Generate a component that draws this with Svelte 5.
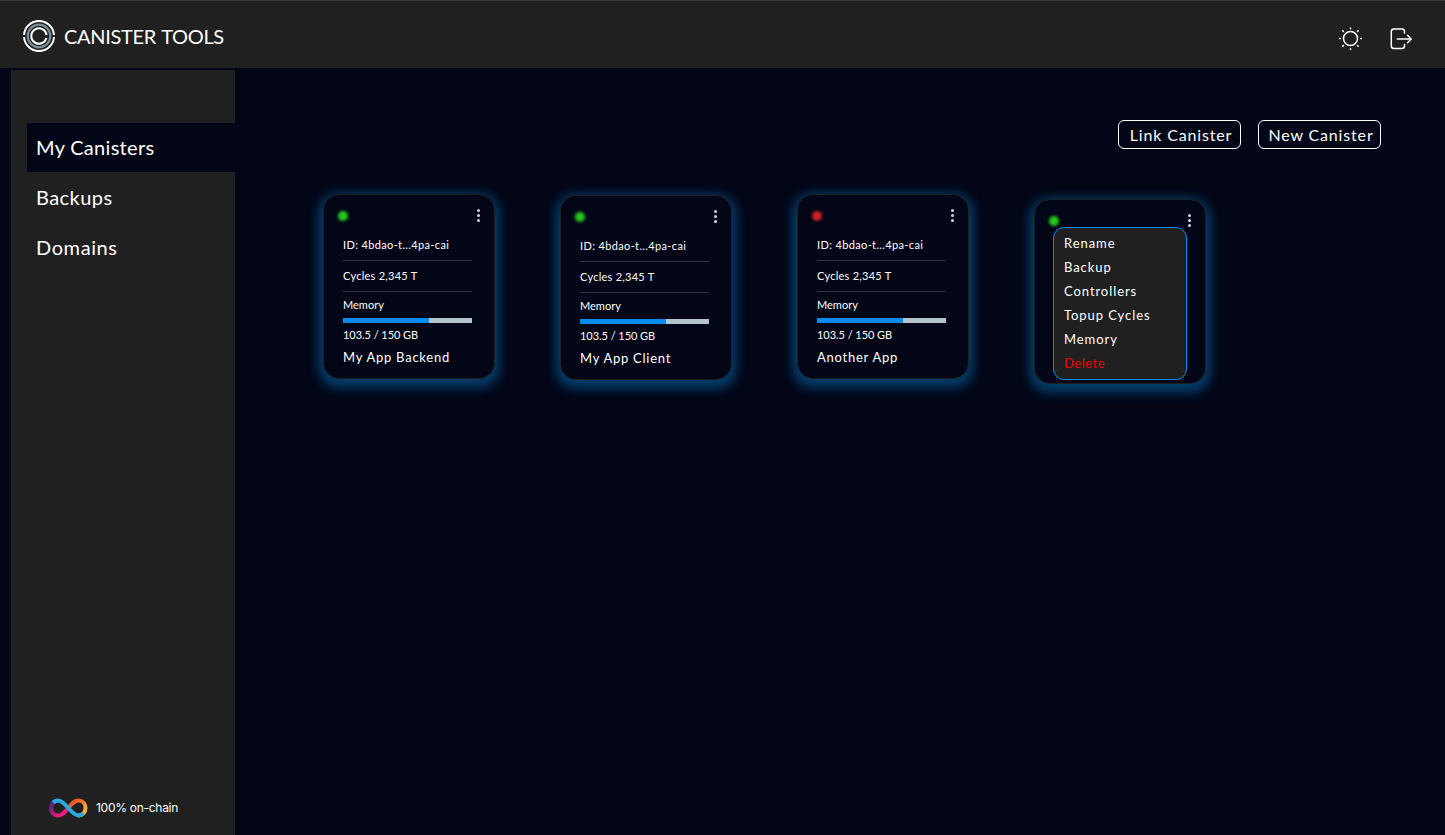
<script>
  const nav = [
    { label: 'My Canisters', active: true, ls: 0.3 },
    { label: 'Backups', ls: 0.45 },
    { label: 'Domains', ls: 0.6 }
  ];
  const actions = ['Link Canister', 'New Canister'];
  const cards = [
    { name: 'My App Backend', color: '#26c81b', top: 0 },
    { name: 'My App Client', color: '#26c81b', top: 1 },
    { name: 'Another App', color: '#cf2222', top: 0 },
    { name: '', color: '#26c81b', top: 5, menu: true }
  ];
  const menu = ['Rename', 'Backup', 'Controllers', 'Topup Cycles', 'Memory', 'Delete'];
</script>

<div class="page">
  <header>
    <div class="brand">
      <svg width="32" height="32" viewBox="0 0 32 32" fill="none">
        <path d="M1.030 15A15 15 0 0 1 30.970 15M30.970 17A15 15 0 0 1 1.030 17" stroke="#fff" stroke-width="2" />
        <circle cx="16" cy="16" r="11.300" stroke="#78909c" stroke-width="2.200" />
        <path d="M23.440 18A7.700 7.700 0 1 1 23.640 15" stroke="#fff" stroke-width="2" />
      </svg>
      <span>CANISTER TOOLS</span>
    </div>
    <div class="tools">
      <svg width="24" height="24" viewBox="0 0 24 24" fill="none" stroke="#fff" stroke-width="1.5" stroke-linecap="round">
        <circle cx="12.500" cy="11.500" r="7" />
        <path d="M12.500 .9v.8M12.500 21.700v.8M1.500 11.500h.8M22.700 11.500h.8M4.800 3.800l.6.6M19.600 18.600l.6.6M4.800 19.200l.6-.6M19.600 4.400l.6-.6" />
      </svg>
      <svg width="24" height="24" viewBox="0 0 24 24" fill="none" stroke="#fff" stroke-width="1.5" stroke-linecap="round" stroke-linejoin="round">
        <path d="M15.500 6V4.500Q15.500 2 13 2H5Q2.300 2 2.300 4.500V19Q2.300 21.500 5 21.500H13Q15.500 21.500 15.500 19V17.500" />
        <path d="M8.500 12H21" stroke="#c8c8c8" stroke-width="2" />
        <path d="M18.500 8.200L22.200 12L18.500 15.800" />
      </svg>
    </div>
  </header>

  <div class="body">
    <aside>
      <nav>
        {#each nav as item}
          <a class:active={item.active} style="letter-spacing:{item.ls}px">{item.label}</a>
        {/each}
      </nav>
      <div class="chain">
        <svg width="39" height="20" viewBox="0 0 39 20" fill="none" stroke-width="4">
          <defs>
            <linearGradient id="warm" x1="19" y1="0" x2="37" y2="18" gradientUnits="userSpaceOnUse">
              <stop offset=".3" stop-color="#f15a24" /><stop offset=".8" stop-color="#fbb03b" />
            </linearGradient>
            <linearGradient id="pink" x1="18" y1="19" x2="3" y2="2" gradientUnits="userSpaceOnUse">
              <stop offset=".25" stop-color="#ed1e79" /><stop offset=".9" stop-color="#522785" />
            </linearGradient>
          </defs>
          <path d="M19.200 10C23 5.500 25.500 2.600 29.300 2.600C33.500 2.600 36.500 5.800 36.500 10S33.500 17.400 29.300 17.400" stroke="url(#warm)" />
          <path d="M19.200 10C15.500 14.500 13 17.400 9.200 17.400C5 17.400 2 14.200 2 10S5 2.600 9.200 2.600" stroke="url(#pink)" />
          <path d="M4 4.600Q6.300 2.600 9.200 2.600C16.200 2.600 22.300 17.400 29.300 17.400Q32.200 17.400 34.500 15.400" stroke="#29abe2" />
        </svg>
        <span>100% on-chain</span>
      </div>
    </aside>

    <main>
      <div class="actions">
        {#each actions as label}<button>{label}</button>{/each}
      </div>
      <div class="cards">
        {#each cards as card}
          <article style="margin-top:{card.top}px">
            <div class="top">
              <i class="status" style="background:{card.color}"></i>
              <i class="dots"><b></b><b></b><b></b></i>
            </div>
            {#if card.menu}
              <ul>
                {#each menu as entry}<li class:danger={entry === 'Delete'}>{entry}</li>{/each}
              </ul>
            {:else}
              <div class="id">ID: 4bdao-t...4pa-cai</div>
              <div class="cycles">Cycles 2,345 T</div>
              <div class="mem">Memory</div>
              <div class="bar"><div></div></div>
              <div class="usage">103.5 / 150 GB</div>
              <div class="name">{card.name}</div>
            {/if}
          </article>
        {/each}
      </div>
    </main>
  </div>
</div>

<style>
  :global(body) { margin: 0; background: #020617; }
  .page { width: 1445px; height: 835px; display: flex; flex-direction: column; overflow: hidden; background: #020617; color: #fff; font-family: Lato, sans-serif; }
  .page, .page * { box-sizing: border-box; }
  header { height: 68px; flex: none; background: #202020; border-top: 1px solid #3b3b3b; display: flex; justify-content: space-between; padding: 19px 32px 0 23px; }
  .brand { display: flex; gap: 9px; height: 32px; align-items: center; font-size: 20px; letter-spacing: -.32px; word-spacing: 1px; white-space: nowrap; }
  .brand svg, .tools svg, .chain svg { flex: none; }
  .brand span { padding-bottom: 1px; }
  .tools { display: flex; gap: 27px; padding-top: 7px; }
  .body { flex: 1; display: flex; min-height: 0; }
  aside { width: 224px; flex: none; margin: 2px 0 0 11px; background: #202020; display: flex; flex-direction: column; justify-content: space-between; padding: 53px 0 17px 16px; }
  nav { display: flex; flex-direction: column; gap: 1px; }
  nav a { height: 49px; line-height: 48px; padding-left: 9px; font-size: 20px; }
  nav .active { background: #020617; }
  .chain { display: flex; gap: 8px; align-items: center; padding-left: 22px; font: 12px/20px Inter, sans-serif; letter-spacing: -.28px; }
  main { flex: 1; padding: 52px 64px 0 88px; }
  .actions { display: flex; justify-content: flex-end; gap: 17px; }
  button { width: 123px; height: 29px; padding: 0 0 0 3px; border: 1px solid #fff; border-radius: 6px; background: none; color: #fff; font: 16px/27px Lato, sans-serif; letter-spacing: .85px; white-space: nowrap; }
  .cards { display: flex; gap: 65px; align-items: flex-start; margin-top: 45px; }
  article { width: 172px; height: 185px; flex: none; border: 1px solid #202020; border-radius: 16px; background: #020617; box-shadow: 0 4px 11px 5px #053c69; padding: 14px 22px 0 19px; }
  .top { display: flex; justify-content: space-between; height: 14px; }
  .status { width: 10px; height: 10px; margin: 2px 0 0 -5px; border-radius: 50%; filter: blur(1.5px); }
  .dots { display: flex; flex-direction: column; gap: 2px; margin-right: -8px; width: 3px; }
  .dots b { width: 3px; height: 3px; border-radius: 50%; background: #d5d7db; }
  .id, .cycles { font-size: 11px; white-space: nowrap; border-bottom: 1px solid #33353e; }
  .id { height: 38px; line-height: 15px; padding-top: 14px; letter-spacing: .36px; }
  .cycles { height: 31px; line-height: 29px; letter-spacing: .25px; }
  .mem { height: 26px; font-size: 11px; line-height: 25px; }
  .bar { height: 5px; background: #b5c4ca; }
  .bar div { width: 86px; height: 5px; background: #078bef; }
  .usage { height: 23px; font-size: 11px; line-height: 24px; letter-spacing: -.05px; }
  .name { font-size: 13px; line-height: 22px; letter-spacing: .75px; white-space: nowrap; }
  ul { list-style: none; margin: -1px 0 0 -1px; width: 134px; height: 153px; padding: 3px 10px; border: 1px solid #078bef; border-radius: 11px; background: #202020; font-size: 13px; line-height: 24px; letter-spacing: .93px; }
  .danger { color: #f00005; letter-spacing: .5px; }
</style>
